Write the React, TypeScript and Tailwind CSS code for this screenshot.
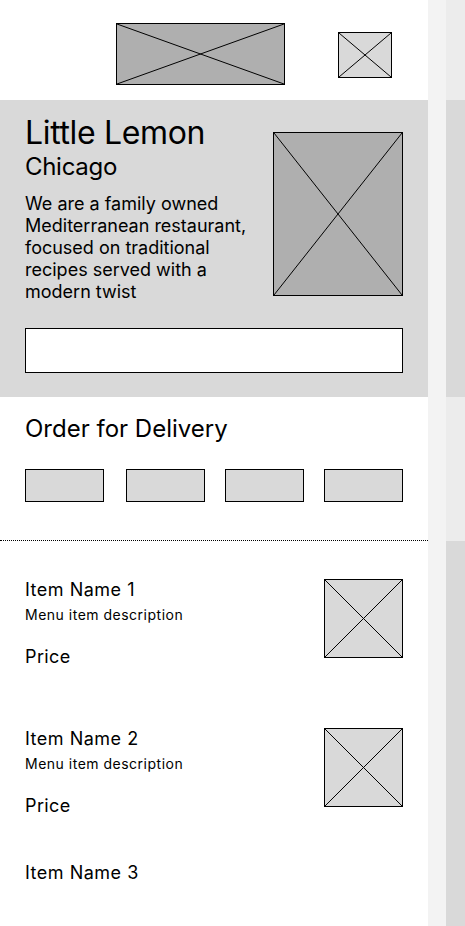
import React from 'react';

function Placeholder({ className }: { className: string }) {
  return (
    <div className={`border border-black shrink-0 ${className}`}>
      <svg className="block w-full h-full" viewBox="0 0 100 100" preserveAspectRatio="none">
        <line x1="0" y1="0" x2="100" y2="100" stroke="#000" strokeWidth="1" vectorEffect="non-scaling-stroke" />
        <line x1="100" y1="0" x2="0" y2="100" stroke="#000" strokeWidth="1" vectorEffect="non-scaling-stroke" />
      </svg>
    </div>
  );
}

function MenuItem({ name, last }: { name: string; last?: boolean }) {
  if (last) {
    return (
      <div className="pt-[45px]">
        <p className="text-[18px] leading-[22px] tracking-[0.5px]">{name}</p>
      </div>
    );
  }
  return (
    <div className="flex justify-between items-start">
      <div>
        <p className="text-[18px] leading-[22px] tracking-[0.5px]">{name}</p>
        <p className="mt-[5px] text-[14px] leading-[17px] tracking-[0.5px]">Menu item description</p>
        <p className="mt-[23px] text-[18px] leading-[22px] tracking-[0.4px]">Price</p>
      </div>
      <Placeholder className="w-[79px] h-[79px] bg-[#d9d9d9]" />
    </div>
  );
}

export default function App() {
  return (
    <div className="flex w-[465px] h-[926px] overflow-hidden bg-white text-black font-['Inter',sans-serif]">
      <main className="w-[428px] shrink-0">
        {/* Nav */}
        <header className="h-[100px] flex items-start pl-[116px]">
          <Placeholder className="mt-[23px] w-[169px] h-[62px] bg-[#afafaf]" />
          <Placeholder className="mt-[32px] ml-[53px] w-[54px] h-[46px] bg-[#d9d9d9]" />
        </header>

        {/* Hero */}
        <section className="bg-[#d9d9d9] px-[25px] pt-[14px] pb-[24px]">
          <div className="flex justify-between items-start">
            <div className="w-[235px]">
              <h1 className="text-[32px] leading-[38px] tracking-[-0.35px]">Little Lemon</h1>
              <h2 className="text-[24px] leading-[29px] tracking-[-0.3px]">Chicago</h2>
              <p className="mt-[12px] text-[18px] leading-[22px]">
                We are a family owned Mediterranean restaurant, focused on traditional recipes served with a modern twist
              </p>
            </div>
            <Placeholder className="mt-[18px] w-[130px] h-[164px] bg-[#afafaf]" />
          </div>
          <div className="mt-[25px] h-[45px] bg-white border border-black" />
        </section>

        {/* Order for delivery */}
        <section className="h-[144px] px-[25px] pt-[17px] border-b border-dotted border-black">
          <h2 className="text-[24px] leading-[29px]">Order for Delivery</h2>
          <div className="mt-[26px] flex">
            <div className="w-[79px] h-[33px] bg-[#d9d9d9] border border-black" />
            <div className="ml-[22px] w-[79px] h-[33px] bg-[#d9d9d9] border border-black" />
            <div className="ml-[20px] w-[79px] h-[33px] bg-[#d9d9d9] border border-black" />
            <div className="ml-[20px] w-[79px] h-[33px] bg-[#d9d9d9] border border-black" />
          </div>
        </section>

        {/* Menu */}
        <section className="px-[25px] pt-[38px] flex flex-col gap-[60px]">
          <MenuItem name="Item Name 1" />
          <MenuItem name="Item Name 2" />
        </section>
        <section className="px-[25px]">
          <MenuItem name="Item Name 3" last />
        </section>
      </main>

      {/* scroll strip */}
      <div className="w-[18px] shrink-0 bg-[#f3f3f3]" />
      <div className="w-[19px] shrink-0 flex flex-col">
        <div className="h-[100px] bg-[#ececec]" />
        <div className="h-[297px] bg-[#d9d9d9]" />
        <div className="h-[144px] bg-[#ececec]" />
        <div className="flex-1 bg-[#d9d9d9]" />
      </div>
    </div>
  );
}
